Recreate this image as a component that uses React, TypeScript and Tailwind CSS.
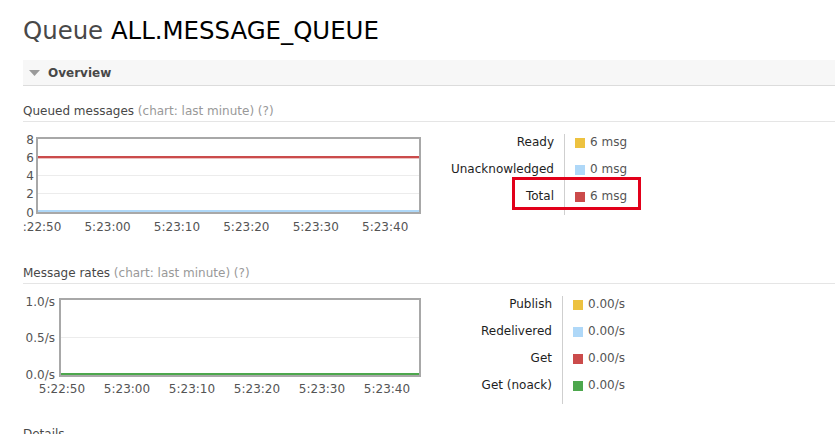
import React from "react";

const q1Labels = ["5:22:50", "5:23:00", "5:23:10", "5:23:20", "5:23:30", "5:23:40"];

function SectionHeader({ title }: { title: string }) {
  return (
    <div className="h-[21px] border-b border-[#e5e5e5] leading-[20px] whitespace-nowrap">
      <span className="text-[#484848]">{title}</span>
      <span className="text-[#999]"> (chart: last minute) (?)</span>
    </div>
  );
}

function LegendRow({ label, color, value }: { label: string; color: string; value: string }) {
  return (
    <div className="flex h-[27px]">
      <div className="h-full border-r border-[#cfcfcf] pr-[10px] text-right text-[#1e1e1e] leading-[17px] w-full">
        {label}
      </div>
      <div className="flex h-[17px] shrink-0 items-center pl-[10px] w-[120px]">
        <span className={`inline-block h-[10px] w-[10px] ${color}`} />
        <span className="ml-[5px] text-[#555] leading-[17px] whitespace-nowrap">{value}</span>
      </div>
    </div>
  );
}

export default function App() {
  return (
    <div className="w-[835px] h-[434px] overflow-hidden bg-white pl-[23px] pt-[16px] font-['DejaVu_Sans',sans-serif] text-[12px] text-[#484848]">
      <h1 className="text-[24.4px] leading-[30px] font-normal text-[#484848] whitespace-nowrap">
        Queue <span className="text-black">ALL.MESSAGE_QUEUE</span>
      </h1>

      <div className="mt-[14px] flex h-[26px] items-center border-b border-[#dcdcdc] bg-[#f7f7f7] pl-[6px]">
        <svg width="11" height="6" viewBox="0 0 11 6" className="shrink-0">
          <polygon points="0,0 11,0 5.5,6" fill="#9a9a9a" />
        </svg>
        <span className="ml-[8px] font-bold text-[#484848]">Overview</span>
      </div>

      <div className="mt-[15px]">
        <SectionHeader title="Queued messages" />
      </div>

      {/* Row 1 */}
      <div className="flex h-[141px]">
        <div className="w-[398px] shrink-0 overflow-hidden pt-[15px]">
          <div className="flex h-[77px]">
            <div className="flex h-[77px] w-[13px] shrink-0 flex-col pr-[2px] text-right text-[#545454]">
              <div className="mt-[-6.5px] flex flex-col">
                {["8", "6", "4", "2", "0"].map((l) => (
                  <div key={l} className="h-[18.25px] leading-[18.25px]">{l}</div>
                ))}
              </div>
            </div>
            <div className="h-[77px] w-[385px] shrink-0 border-2 border-[#a8a8a8]">
              <svg width="381" height="73" viewBox="0 0 381 73" className="block">
                <line x1="0" x2="381" y1="36.5" y2="36.5" stroke="#ececec" strokeWidth="1" />
                <line x1="0" x2="381" y1="54.5" y2="54.5" stroke="#ececec" strokeWidth="1" />
                <line x1="0" x2="381" y1="19.5" y2="19.5" stroke="#cb4b4b" strokeOpacity="0.35" strokeWidth="1" />
                <line x1="0" x2="381" y1="18" y2="18" stroke="#edc240" strokeWidth="2" />
                <line x1="0" x2="381" y1="18" y2="18" stroke="#cb4b4b" strokeWidth="2" />
                <line x1="0" x2="381" y1="72" y2="72" stroke="#afd8f8" strokeWidth="2" />
              </svg>
            </div>
          </div>
          <div className="ml-[-19.5px] mt-[5.5px] flex text-[#545454]">
            {q1Labels.map((l) => (
              <div key={l} className="w-[69.4px] shrink-0 text-center leading-[14px] whitespace-nowrap">{l}</div>
            ))}
          </div>
        </div>

        <div className="relative mt-[12px] w-[264px]">
          <div className="flex flex-col [&>div>div:first-child]:w-[144px] [&>div>div:first-child]:shrink-0">
            <LegendRow label="Ready" color="bg-[#edc240]" value="6 msg" />
            <LegendRow label="Unacknowledged" color="bg-[#afd8f8]" value="0 msg" />
            <LegendRow label="Total" color="bg-[#cb4b4b]" value="6 msg" />
          </div>
          <div className="absolute left-[91px] top-[43px] h-[33px] w-[129px] border-[3px] border-[#e2001a]" />
        </div>
      </div>

      <SectionHeader title="Message rates" />

      {/* Row 2 */}
      <div className="flex h-[140px]">
        <div className="w-[398px] shrink-0 overflow-hidden pt-[14px]">
          <div className="flex h-[79px]">
            <div className="flex h-[79px] w-[36px] shrink-0 flex-col pr-[4px] text-right text-[#545454]">
              <div className="mt-[-14.3px] flex flex-col">
                {["1.0/s", "0.5/s", "0.0/s"].map((l) => (
                  <div key={l} className="h-[36.6px] leading-[36.6px]">{l}</div>
                ))}
              </div>
            </div>
            <div className="h-[79px] w-[362px] shrink-0 border-2 border-[#a8a8a8]">
              <svg width="358" height="75" viewBox="0 0 358 75" className="block">
                <line x1="0" x2="358" y1="37.5" y2="37.5" stroke="#ececec" strokeWidth="1" />
                <line x1="0" x2="358" y1="74" y2="74" stroke="#4da74d" strokeWidth="2" />
              </svg>
            </div>
          </div>
          <div className="ml-[6.5px] mt-[4.5px] flex text-[#545454]">
            {q1Labels.map((l) => (
              <div key={l} className="w-[65px] shrink-0 text-center leading-[14px] whitespace-nowrap">{l}</div>
            ))}
          </div>
        </div>

        <div className="mt-[12px] w-[264px]">
          <div className="flex flex-col [&>div>div:first-child]:w-[142px] [&>div>div:first-child]:shrink-0">
            <LegendRow label="Publish" color="bg-[#edc240]" value="0.00/s" />
            <LegendRow label="Redelivered" color="bg-[#afd8f8]" value="0.00/s" />
            <LegendRow label="Get" color="bg-[#cb4b4b]" value="0.00/s" />
            <LegendRow label="Get (noack)" color="bg-[#4da74d]" value="0.00/s" />
          </div>
        </div>
      </div>

      <div className="leading-[20px] text-[#484848]">Details</div>
    </div>
  );
}
